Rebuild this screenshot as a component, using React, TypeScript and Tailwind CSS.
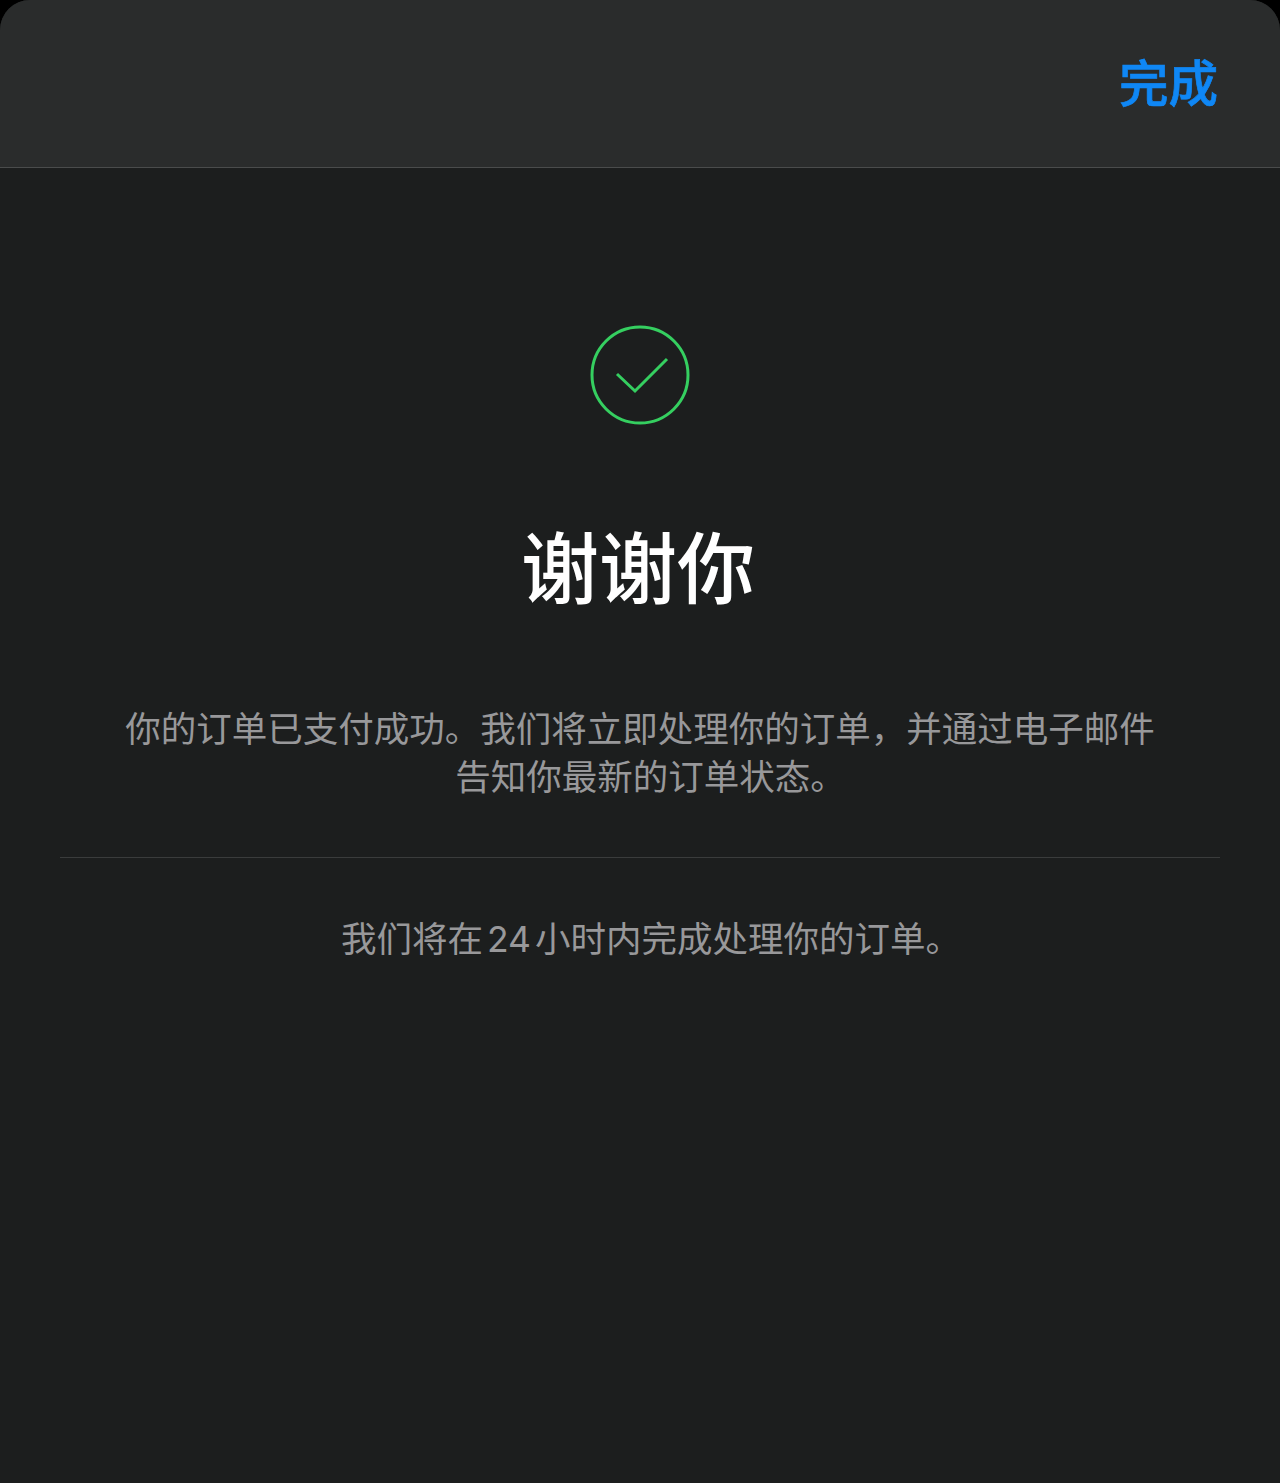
const cjk = "font-['Inter','Noto_Sans_CJK_SC',sans-serif]";

export default function App() {
  return (
    <div className={`min-h-[1483px] w-[1280px] bg-black ${cjk}`}>
      <div className="flex min-h-[1483px] flex-col overflow-hidden rounded-t-[30px] bg-[#1c1e1e]">
        <header className="flex h-[168px] items-center justify-end border-b border-[#4a4c4c] bg-[#2a2c2c] pr-[62px]">
          <button className="pt-[2px] text-[49.5px] leading-none font-medium text-[#0f87f5] [-webkit-text-stroke:0.7px_#0f87f5]">完成</button>
        </header>

        <main className="flex flex-col items-center px-[60px] pt-[157px]">
          <svg width="100" height="100" viewBox="0 0 100 100" fill="none" stroke="#35cf60">
            <circle cx="50" cy="50" r="48" strokeWidth="3" />
            <path d="M27 49 L45 66 L77 34" strokeWidth="3" />
          </svg>

          <h1 className="mt-[100px] pr-[4px] text-[78px] leading-[90px] font-medium text-white">谢谢你</h1>

          <p className="mt-[91px] w-[1040px] text-center text-[35.5px] leading-[48px] text-[#98989a]">
            <span className="block">你的订单已支付成功。我们将立即处理你的订单，并通过电子邮件</span>
            <span className="block pl-[21px]">告知你最新的订单状态。</span>
          </p>

          <div className="mt-[55px] h-px w-full bg-[#3a3c3c]" />

          <p className="mt-[58px] pl-[22px] text-center text-[35.5px] leading-[48px] whitespace-nowrap text-[#98989a] [word-spacing:-6px]">
            我们将在 24 小时内完成处理你的订单。
          </p>
        </main>
      </div>
    </div>
  );
}
